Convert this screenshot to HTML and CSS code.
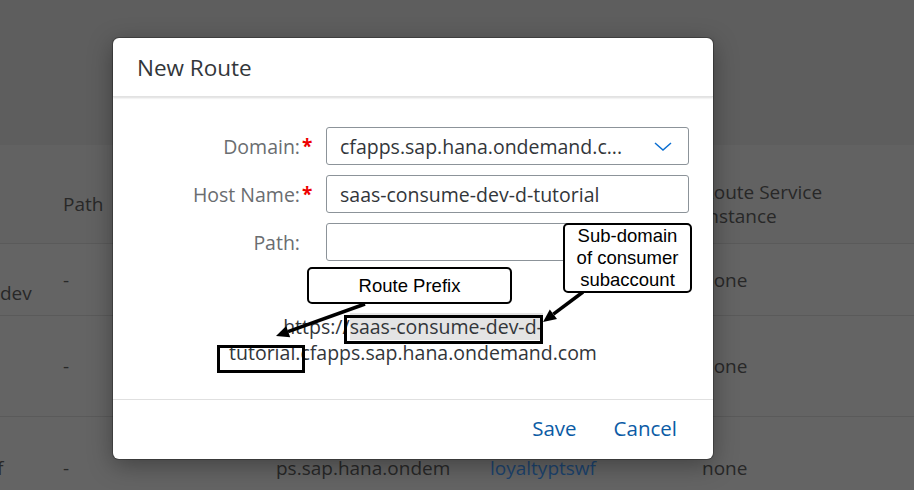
FILE: index.html
```html
<!DOCTYPE html>
<html lang="en">
<head>
<meta charset="utf-8">
<title>New Route</title>
<link rel="stylesheet" href="styles.css">
</head>
<body>
<div class="page">
  <div class="toolbar"></div>
  <div class="table">
    <div class="row head">
      <div class="cell"></div>
      <div class="cell">Path</div>
      <div class="cell"></div>
      <div class="cell"></div>
      <div class="cell">Route Service<br>Instance</div>
    </div>
    <div class="row r1">
      <div class="cell"><span class="dev">dev</span></div>
      <div class="cell">-</div>
      <div class="cell"></div>
      <div class="cell"></div>
      <div class="cell">none</div>
    </div>
    <div class="row r2">
      <div class="cell"></div>
      <div class="cell">-</div>
      <div class="cell"></div>
      <div class="cell"></div>
      <div class="cell">none</div>
    </div>
    <div class="row r3">
      <div class="cell"><span class="cut">f</span></div>
      <div class="cell">-</div>
      <div class="cell">ps.sap.hana.ondem</div>
      <div class="cell link">loyaltyptswf</div>
      <div class="cell">none</div>
    </div>
  </div>
</div>

<div class="dialog">
  <header class="dlg-head"><h1>New Route</h1></header>
  <div class="dlg-body">
    <div class="form">
      <label class="lbl">Domain:<span class="req">*</span></label>
      <div class="input select">
        <span class="val">cfapps.sap.hana.ondemand.c...</span>
        <svg class="chev" width="18" height="9" viewBox="0 0 18 9"><path d="M1 1 L9 8 L17 1" fill="none" stroke="#0a6ed1" stroke-width="1.5"/></svg>
      </div>
      <label class="lbl">Host Name:<span class="req">*</span></label>
      <div class="input"><span class="val">saas-consume-dev-d-tutorial</span></div>
      <label class="lbl">Path:<span class="req"></span></label>
      <div class="input"></div>
    </div>
    <div class="url">https://<span class="hl">saas-consume-dev-d-</span><br>tutorial.cfapps.sap.hana.ondemand.com</div>
  </div>
  <footer class="dlg-foot">
    <button class="btn">Save</button>
    <button class="btn">Cancel</button>
  </footer>

  <div class="annot">
    <div class="frame f-saas"></div>
    <div class="frame f-tut"></div>
    <svg class="arrows" width="600" height="421" viewBox="0 0 600 421">
      <line x1="252" y1="266" x2="175" y2="293.6" stroke="#000" stroke-width="3.5"/>
      <polygon points="163,298 177.2,299.2 173.2,287.9" fill="#000"/>
      <line x1="470" y1="254" x2="440.4" y2="276.2" stroke="#000" stroke-width="3.5"/>
      <polygon points="430,284 444,281 436.8,271.4" fill="#000"/>
    </svg>
    <div class="callout c-prefix">Route Prefix</div>
    <div class="callout c-sub">Sub-domain<br>of consumer<br>subaccount</div>
  </div>
</div>
</body>
</html>
```

FILE: styles.css
```css
* { box-sizing: border-box; }
html, body { margin: 0; padding: 0; }
body {
  width: 914px;
  height: 490px;
  overflow: hidden;
  background: #5f5f5f;
  font-family: "Open Sans", "Noto Sans", sans-serif;
  position: relative;
}

.page { width: 914px; height: 490px; overflow: hidden; }
.toolbar { height: 145px; background: #5e5e5e; }

.table { color: #282828; font-size: 19px; }
.row {
  display: grid;
  grid-template-columns: 63px 213px 214px 212px 1fr;
  align-items: center;
  border-top: 1px solid #5a5a5a;
  background: #646464;
}
.row.head { height: 98px; padding-top: 20px; border-top: none; background: #626262; line-height: 24px; }
.row.r1 { height: 72px; }
.row.r2 { height: 101px; }
.row.r3 { height: 74px; align-items: start; padding-top: 38px; }
.cell { white-space: nowrap; }
.dev { display: block; padding-top: 26px; }
.cut { display: block; margin-left: -3px; }
.link { color: #1c436e; }

.dialog {
  position: absolute;
  left: 113px;
  top: 38px;
  width: 600px;
  height: 421px;
  background: #fff;
  border-radius: 6px;
  box-shadow: 0 0 0 1px rgba(0,0,0,0.25), 0 6px 24px rgba(0,0,0,0.35);
  display: flex;
  flex-direction: column;
}
.dlg-head {
  height: 59px;
  display: flex;
  align-items: center;
  padding-left: 24px;
  box-shadow: 0 1px 2px rgba(0,0,0,0.15);
  border-bottom: 1px solid #e2e2e2;
  position: relative;
}
.dlg-head h1 {
  margin: 0;
  font-weight: 400;
  font-size: 22.5px;
  color: #32363a;
}
.dlg-body { flex: 1; padding-top: 30px; }

.form {
  display: grid;
  grid-template-columns: 200px 363px;
  column-gap: 13px;
  row-gap: 10px;
}
.lbl {
  display: flex;
  justify-content: flex-end;
  align-items: center;
  color: #6a6d70;
  font-size: 19.5px;
}
.req {
  width: 13px;
  padding-left: 2px;
  color: #e00;
  font-weight: 700;
  font-size: 19px;
}
.input {
  height: 38px;
  border: 1px solid #8c9399;
  border-radius: 3px;
  display: flex;
  align-items: center;
  padding-left: 13px;
  padding-right: 16px;
  font-size: 19.5px;
  color: #32363a;
}
.select { justify-content: space-between; }
.chev { display: block; }

.url {
  margin-top: 53px;
  text-align: center;
  font-size: 19.5px;
  line-height: 26px;
  color: #32363a;
}
.hl { background: #e4e4e4; }

.dlg-foot {
  height: 60px;
  border-top: 1px solid #e0e0e0;
  display: flex;
  justify-content: flex-end;
  align-items: center;
  gap: 37px;
  padding-right: 36px;
  padding-bottom: 4px;
}
.btn {
  border: none;
  background: none;
  padding: 0;
  font-family: inherit;
  font-size: 20.5px;
  color: #0b5ba5;
}

.annot { position: absolute; left: 0; top: 0; width: 600px; height: 421px; pointer-events: none; }
.arrows { position: absolute; left: 0; top: 0; }
.frame { position: absolute; border: 3px solid #000; }
.f-saas { left: 231px; top: 277px; width: 199px; height: 29px; }
.f-tut { left: 104px; top: 307px; width: 88px; height: 28px; }
.callout {
  position: absolute;
  background: #fff;
  border: 2px solid #000;
  border-radius: 5px;
  font-family: "Liberation Sans", Arial, sans-serif;
  font-size: 18.5px;
  color: #000;
  text-align: center;
  display: flex;
  align-items: center;
  justify-content: center;
}
.c-prefix { left: 194px; top: 229px; width: 205px; height: 37px; }
.c-sub { left: 450px; top: 185px; width: 129px; height: 70px; line-height: 22px; }
```
